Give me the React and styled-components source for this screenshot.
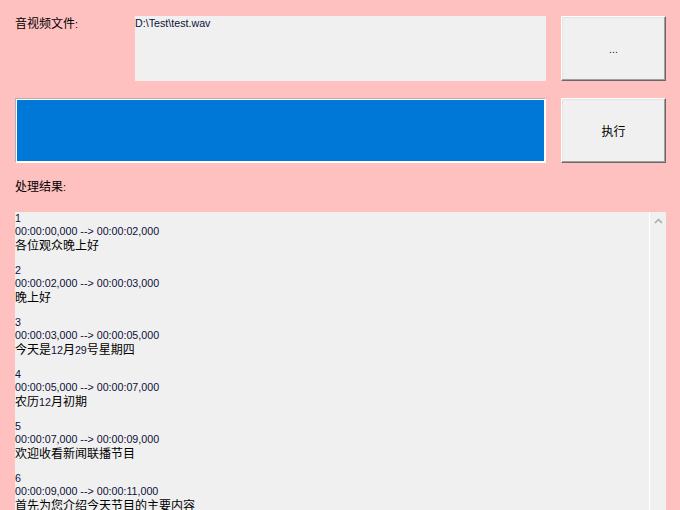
import styled, { createGlobalStyle } from "styled-components";

const GlobalStyle = createGlobalStyle`
  html, body {
    margin: 0;
    padding: 0;
    background: #ffc0c0;
  }
  body {
    width: 680px;
    height: 510px;
    overflow: hidden;
    font-family: "Liberation Sans", "Noto Sans CJK SC", sans-serif;
  }
`;

const Form = styled.div`
  width: 680px;
  height: 510px;
  padding: 16px 0 0 15px;
  box-sizing: border-box;
  display: flex;
  flex-direction: column;
`;

const TopRow = styled.div`
  display: grid;
  grid-template-columns: ${(p) => p.$cols};
  column-gap: 15px;
  height: 65px;
  margin-bottom: ${(p) => p.$gap || 0}px;
`;

const Label = styled.div`
  font-size: 12px;
  line-height: 14px;
  color: #000;
  white-space: nowrap;
`;

const FileBox = styled.div`
  background: #f0f0f0;
  font-size: 10.7px;
  line-height: 13px;
  padding-top: 1px;
`;

const Button = styled.div`
  background: #f0f0f0;
  border-top: 1px solid #fff;
  border-left: 1px solid #fff;
  border-right: 1px solid #696969;
  border-bottom: 1px solid #696969;
  box-shadow: inset -1px -1px 0 #a0a0a0, inset 1px 1px 0 #e3e3e3;
  display: flex;
  align-items: center;
  justify-content: center;
  font-size: 12px;
  color: #000;
  box-sizing: border-box;
`;

const ProgressFrame = styled.div`
  border: 1px solid;
  border-color: #b0b0b0 #fff #fff #b0b0b0;
  padding: 1px;
  background: #fff;
  box-sizing: border-box;
  display: flex;
`;

const ProgressFill = styled.div`
  flex: 1;
  background: #0078d7;
`;

const ResultLabel = styled(Label)`
  margin-top: 16px;
  height: 33px;
`;

const ResultBox = styled.div`
  width: 651px;
  flex: 1;
  background: #f0f0f0;
  display: flex;
  overflow: hidden;
`;

const ResultText = styled.div`
  flex: 1;
  overflow: hidden;
`;

const Line = styled.div`
  height: 13px;
  line-height: 13px;
  font-size: 10.7px;
  white-space: nowrap;
`;

const Latin = styled.span`
  font-family: "Liberation Sans", sans-serif;
  font-size: 10.7px;
  color: ${(p) => p.$color || "#0d1038"};
`;

const Han = styled.span`
  font-family: "Noto Sans CJK SC", sans-serif;
  font-size: 12px;
  color: #000;
`;

const ScrollBar = styled.div`
  width: 16px;
  border-left: 1px solid #fff;
  background: #f0f0f0;
  display: flex;
  justify-content: center;
  padding-top: 6px;
`;

const entries = [
  ["1", "00:00:00,000 --> 00:00:02,000", "各位观众晚上好"],
  ["2", "00:00:02,000 --> 00:00:03,000", "晚上好"],
  ["3", "00:00:03,000 --> 00:00:05,000", "今天是12月29号星期四"],
  ["4", "00:00:05,000 --> 00:00:07,000", "农历12月初期"],
  ["5", "00:00:07,000 --> 00:00:09,000", "欢迎收看新闻联播节目"],
  ["6", "00:00:09,000 --> 00:00:11,000", "首先为您介绍今天节目的主要内容"],
];

// split into CJK and latin runs so each gets its own size
const Mixed = ({ text }) => {
  const parts = text.match(/[\u3000-\u9fff\uff00-\uffef]+|[^\u3000-\u9fff\uff00-\uffef]+/g) || [];
  return parts.map((p, i) =>
    /[\u3000-\u9fff]/.test(p) ? <Han key={i}>{p}</Han> : <Latin key={i}>{p}</Latin>
  );
};

const App = () => {
  return (
    <>
      <GlobalStyle />
      <Form>
        <TopRow $cols="105px 411px 105px" $gap={17}>
          <Label>
            <Han>音视频文件</Han>
            <Latin $color="#000">:</Latin>
          </Label>
          <FileBox>
            <Latin>D:\Test\test.wav</Latin>
          </FileBox>
          <Button>
            <Latin $color="#301040">...</Latin>
          </Button>
        </TopRow>
        <TopRow $cols="531px 105px">
          <ProgressFrame>
            <ProgressFill />
          </ProgressFrame>
          <Button>
            <Han>执行</Han>
          </Button>
        </TopRow>
        <ResultLabel>
          <Han>处理结果</Han>
          <Latin $color="#000">:</Latin>
        </ResultLabel>
        <ResultBox>
          <ResultText>
            {entries.map(([n, time, text]) => (
              <div key={n}>
                <Line>
                  <Latin>{n}</Latin>
                </Line>
                <Line>
                  <Latin>{time}</Latin>
                </Line>
                <Line>
                  <Mixed text={text} />
                </Line>
                <Line />
              </div>
            ))}
          </ResultText>
          <ScrollBar>
            <svg width="9" height="6" viewBox="0 0 9 6">
              <path d="M1 5 L4.5 1.5 L8 5" fill="none" stroke="#a8a8a8" strokeWidth="1.5" />
            </svg>
          </ScrollBar>
        </ResultBox>
      </Form>
    </>
  );
};

export default App;
